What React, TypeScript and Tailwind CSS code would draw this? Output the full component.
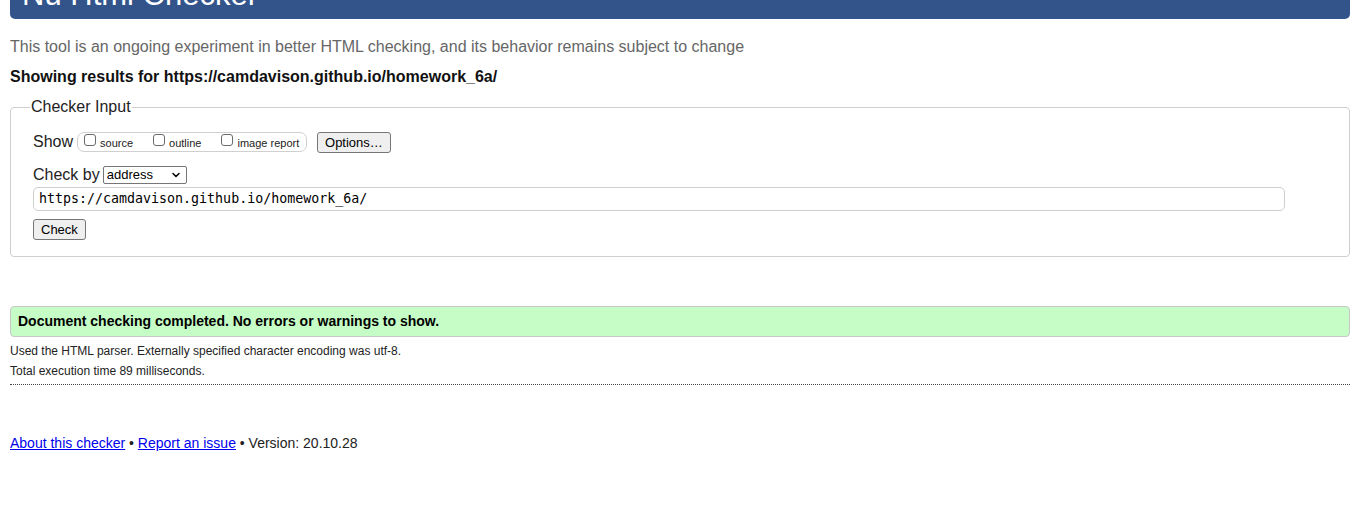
import { ChevronDown } from "lucide-react";

const Checkbox = ({ label }: { label: string }) => (
  <span className="flex items-center">
    <span className="w-[12px] h-[12px] border border-[#6b6b6b] rounded-[3px] bg-white -mt-[4px]" />
    <span className="ml-[4px] text-[11px] text-[#222] leading-none mt-[2px]">{label}</span>
  </span>
);

const Button = ({ children }: { children: React.ReactNode }) => (
  <span className="inline-flex items-center h-[21px] px-[7px] border border-[#767676] rounded-[3px] bg-[#efefef] text-[13px] text-black leading-none">
    {children}
  </span>
);

export default function App() {
  return (
    <div className="min-h-[521px] bg-white pl-[10px] pr-[6px] font-['Liberation_Sans',Arial,sans-serif] text-[#222]">
      <div className="-mt-[41px] h-[60px] bg-[#33548a] rounded-b-[5px] flex items-end px-[12px] pb-[9px]">
        <h1 className="text-white text-[31px] leading-none">Nu Html Checker</h1>
      </div>

      <p className="mt-[19px] text-[16px] leading-[18px] text-[#666]">
        This tool is an ongoing experiment in better HTML checking, and its behavior remains subject to change
      </p>
      <p className="mt-[12px] text-[16px] leading-[18px] font-bold text-[#111]">
        Showing results for https://camdavison.github.io/homework_6a/
      </p>

      <fieldset className="mt-[12px] border border-[#cfcfcf] rounded-[4px] pl-[22px] pr-[65px] pb-[16px]">
        <legend className="-ml-[3px] px-[1px] text-[16px] leading-[18px] text-[#222]">Checker Input</legend>

        <div className="mt-[16px] flex items-center h-[20px]">
          <span className="text-[16px] leading-none">Show</span>
          <span className="ml-[4px] flex items-center h-[20px] w-[230px] border border-[#d0d0d0] rounded-[7px] pl-[6px]">
            <Checkbox label="source" />
            <span className="w-[20px]" />
            <Checkbox label="outline" />
            <span className="w-[20px]" />
            <Checkbox label="image report" />
          </span>
          <span className="ml-[10px]">
            <Button>Options…</Button>
          </span>
        </div>

        <div className="mt-[13px] flex items-center h-[19px]">
          <span className="text-[16px] leading-none">Check by</span>
          <span className="ml-[3px] flex items-center justify-between w-[84px] h-[18px] border border-[#767676] rounded-[2px] bg-white pl-[3px] pr-[4px] text-[13px] text-black leading-none">
            address
            <ChevronDown size={12} strokeWidth={3} className="text-black" />
          </span>
        </div>

        <div className="mt-[3px] h-[24px] border border-[#cfcfcf] rounded-[5px] flex items-center px-[5px] mr-[-1px] font-['DejaVu_Sans_Mono',monospace] text-[13.3px] text-black">
          https://camdavison.github.io/homework_6a/
        </div>

        <div className="mt-[8px] flex">
          <Button>Check</Button>
        </div>
      </fieldset>

      <div className="mt-[49px] h-[31px] border border-[#c8c8c8] rounded-[4px] bg-[#c6fdc6] flex items-center px-[7px]">
        <span className="text-[14px] font-bold text-black">Document checking completed. No errors or warnings to show.</span>
      </div>

      <p className="mt-[7px] text-[12px] leading-[14px] text-[#222]">
        Used the HTML parser. Externally specified character encoding was utf-8.
      </p>
      <p className="mt-[6px] text-[12px] leading-[14px] text-[#222]">Total execution time 89 milliseconds.</p>
      <div className="mt-[6px] border-b border-dotted border-[#444]" />

      <p className="mt-[50px] text-[14px] leading-[16px] text-[#222]">
        <a href="#" className="text-[#0000ee] underline">About this checker</a>
        {" • "}
        <a href="#" className="text-[#0000ee] underline">Report an issue</a>
        {" • Version: 20.10.28"}
      </p>
    </div>
  );
}
